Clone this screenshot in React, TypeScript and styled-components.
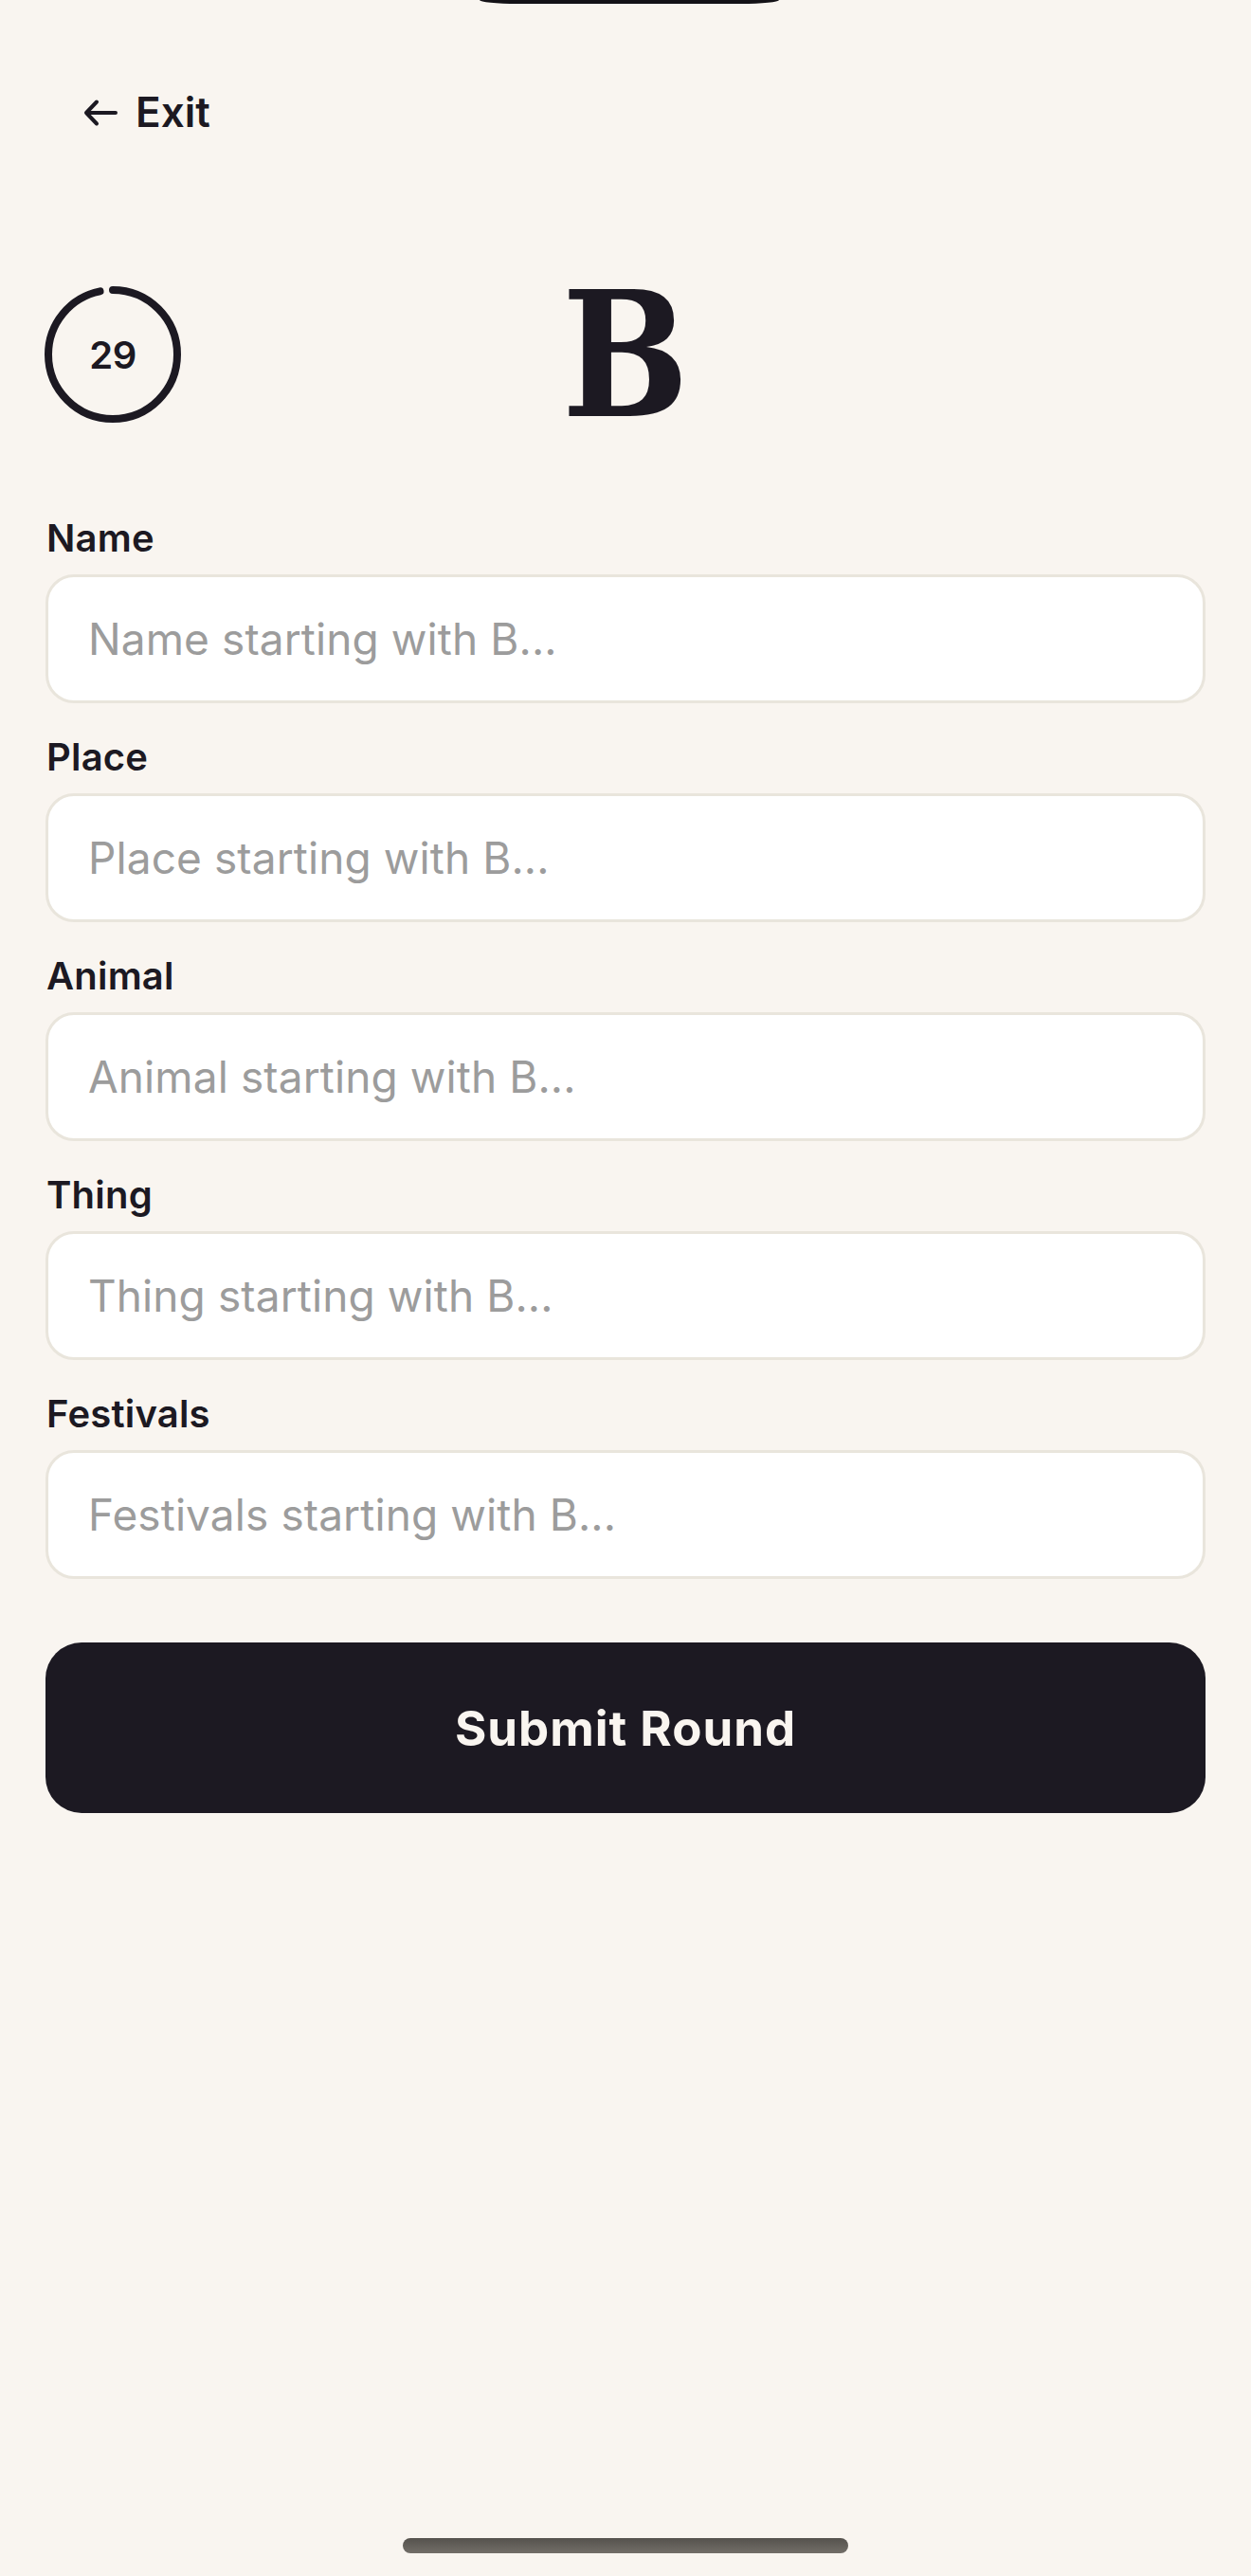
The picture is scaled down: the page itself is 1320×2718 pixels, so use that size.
import * as React from 'react';
import styled, { createGlobalStyle } from 'styled-components';

const GlobalStyle = createGlobalStyle`
  html, body {
    margin: 0;
    padding: 0;
    background: #f9f5f0;
  }
  body {
    font-family: Inter, "Noto Sans", "Liberation Sans", sans-serif;
    color: #1c1922;
  }
  * { box-sizing: border-box; }
`;

const Screen = styled.div`
  min-height: 2718px;
  display: flex;
  flex-direction: column;
  background: #f9f5f0;
`;

const Island = styled.div`
  align-self: center;
  width: 316px;
  height: 4px;
  margin-left: 8px;
  background: #141217;
  border-radius: 0 0 40px 40px / 0 0 4px 4px;
`;

const Content = styled.main`
  display: flex;
  flex-direction: column;
  padding: 0 48px;
`;

const ExitButton = styled.button`
  align-self: flex-start;
  display: flex;
  align-items: center;
  gap: 19px;
  margin: 88px 0 0 40px;
  padding: 0;
  border: 0;
  background: none;
  color: #1c1922;
  font-family: Inter, sans-serif;
  font-size: 44px;
  font-weight: 600;
  line-height: 53px;
  cursor: pointer;
`;

const HeaderRow = styled.div`
  display: grid;
  grid-template-columns: 1fr auto 1fr;
  align-items: center;
  margin-top: 157px;
  height: 144px;
`;

const Timer = styled.div`
  position: relative;
  width: 144px;
  height: 144px;
  margin-left: -1px;
`;

const TimerValue = styled.span`
  position: absolute;
  inset: 0;
  display: flex;
  align-items: center;
  justify-content: center;
  font-family: Inter, sans-serif;
  font-size: 40px;
  font-weight: 600;
  letter-spacing: -0.5px;
  color: #1c1922;
`;

const Letter = styled.div`
  font-family: "DejaVu Serif", "Liberation Serif", serif;
  font-weight: 700;
  font-size: 184px;
  line-height: 144px;
  color: #1c1922;
  transform: scaleX(0.86);
`;

const Form = styled.form`
  display: flex;
  flex-direction: column;
  gap: 33px;
  margin-top: 98px;
`;

const Field = styled.label`
  display: flex;
  flex-direction: column;
  gap: 15px;
`;

const FieldLabel = styled.span`
  font-family: Inter, sans-serif;
  font-size: 40px;
  font-weight: 600;
  line-height: 47px;
  letter-spacing: 0.2px;
  padding-left: 1px;
  color: #1c1922;
`;

const TextInput = styled.input`
  width: 100%;
  height: 136px;
  padding: 0 42px;
  border: 3px solid #e9e5dc;
  border-radius: 30px;
  background: #ffffff;
  font-family: Inter, sans-serif;
  font-size: 46px;
  font-weight: 400;
  letter-spacing: 0.1px;
  color: #1c1922;
  outline: none;

  &::placeholder {
    color: #9c9c9c;
  }
`;

const SubmitButton = styled.button`
  margin-top: 34px;
  height: 180px;
  width: 100%;
  border: 0;
  border-radius: 38px;
  background: #1c1922;
  color: #f9f5f0;
  font-family: Inter, sans-serif;
  font-size: 51px;
  font-weight: 700;
  letter-spacing: 1px;
  cursor: pointer;
`;

const HomeIndicator = styled.div`
  align-self: center;
  width: 470px;
  height: 16px;
  margin: auto 0 24px;
  border-radius: 8px;
  background: linear-gradient(#55524d, #726e68);
`;

const ArrowLeft = () => (
  <svg width="36" height="30" viewBox="0 0 36 30" fill="none">
    <path d="M34 15H3M14 3.5L3 15l11 11.5" stroke="#1c1922" strokeWidth="4" strokeLinecap="round" strokeLinejoin="round" />
  </svg>
);

const TimerRing = ({ value, total }: { value: number; total: number }) => {
  const r = 68;
  const c = 2 * Math.PI * r;
  const filled = (value / total) * c;
  return (
    <svg width="144" height="144" viewBox="0 0 144 144">
      <circle
        cx="72"
        cy="72"
        r={r}
        fill="none"
        stroke="#1c1922"
        strokeWidth="8"
        strokeLinecap="round"
        strokeDasharray={`${filled} ${c}`}
        transform="rotate(-90 72 72)"
      />
    </svg>
  );
};

const categories = ['Name', 'Place', 'Animal', 'Thing', 'Festivals'];

export default function App() {
  const letter = 'B';
  return (
    <Screen>
      <GlobalStyle />
      <Island />
      <Content>
        <ExitButton type="button">
          <ArrowLeft />
          Exit
        </ExitButton>
        <HeaderRow>
          <Timer>
            <TimerRing value={29} total={30} />
            <TimerValue>29</TimerValue>
          </Timer>
          <Letter>{letter}</Letter>
          <div />
        </HeaderRow>
        <Form onSubmit={(e) => e.preventDefault()}>
          {categories.map((cat) => (
            <Field key={cat}>
              <FieldLabel>{cat}</FieldLabel>
              <TextInput placeholder={`${cat} starting with ${letter}...`} />
            </Field>
          ))}
          <SubmitButton type="submit">Submit Round</SubmitButton>
        </Form>
      </Content>
      <HomeIndicator />
    </Screen>
  );
}
